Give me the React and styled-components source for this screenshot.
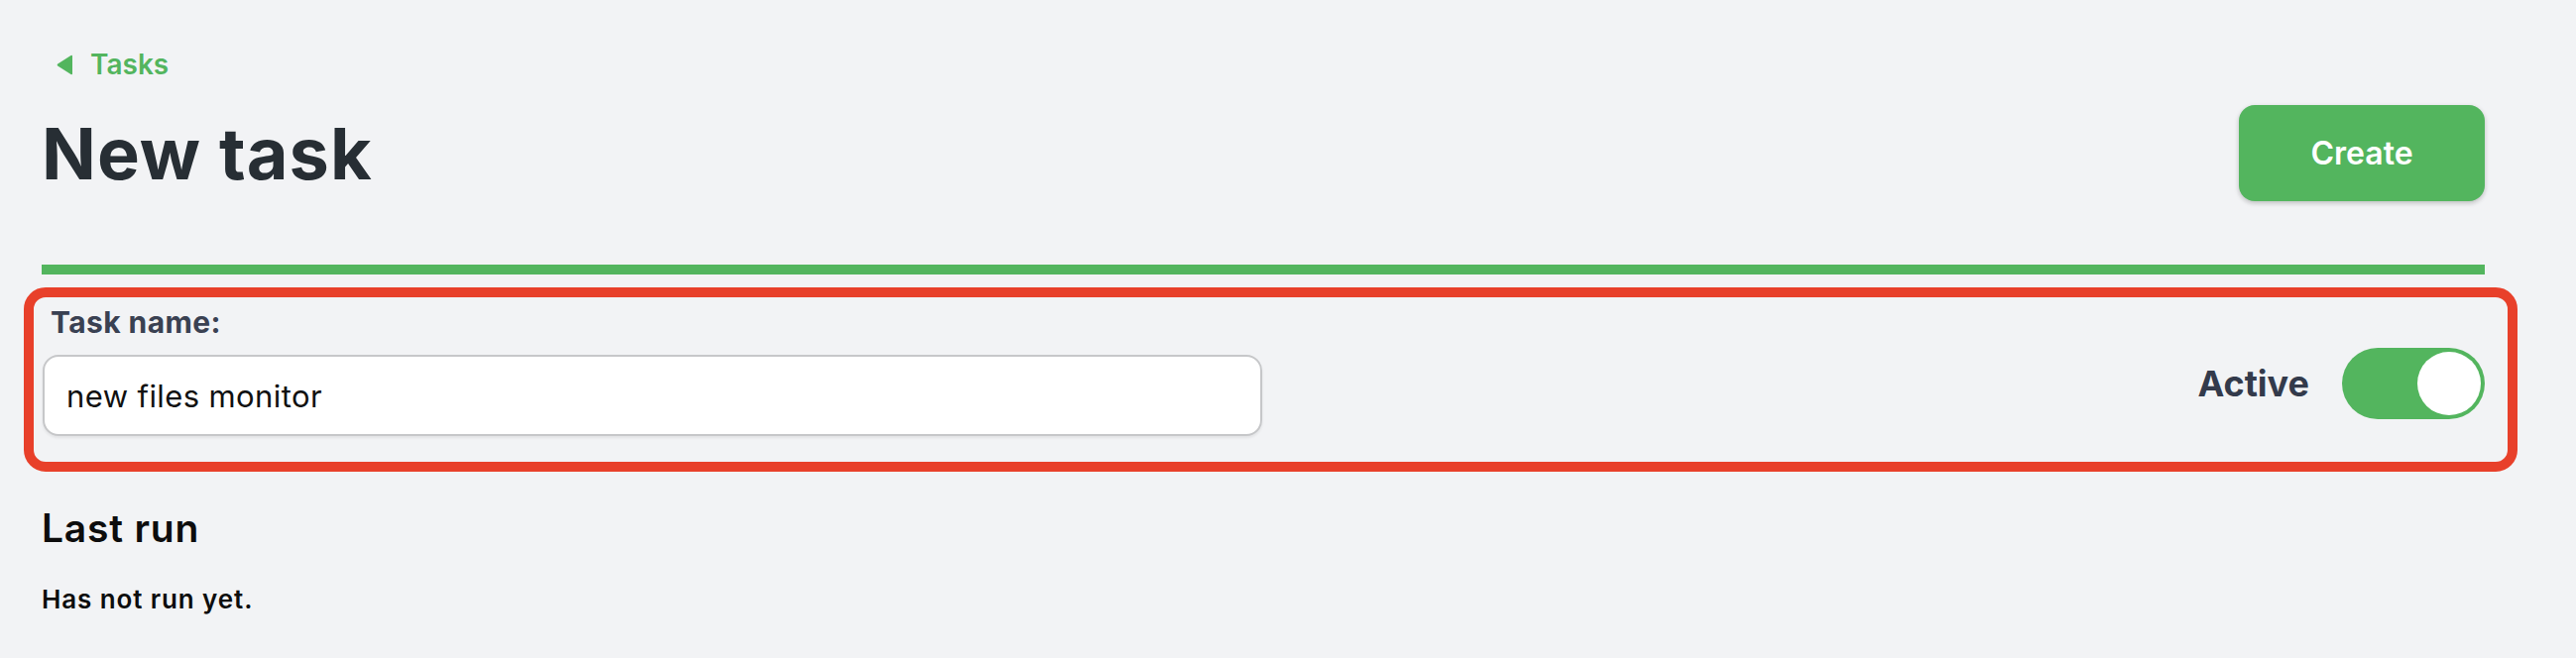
import React, { useState } from 'react'
import styled, { createGlobalStyle } from 'styled-components'

const GlobalStyle = createGlobalStyle`
  * { box-sizing: border-box; }
  body {
    margin: 0;
    background: #f2f3f5;
    font-family: Inter, "Noto Sans", "Liberation Sans", sans-serif;
  }
`

const Page = styled.div`
  padding: 48px 92px 40px 42px;
`

const Breadcrumb = styled.a`
  display: flex;
  align-items: center;
  gap: 17px;
  padding-left: 15px;
  height: 34px;
  font-size: 28px;
  font-weight: 600;
  color: #53b55e;
  text-decoration: none;
`

const Header = styled.div`
  display: flex;
  align-items: center;
  justify-content: space-between;
  margin-top: 24px;
  padding-bottom: 64px;
  border-bottom: 10px solid #53b55e;
`

const Title = styled.h1`
  margin: 0;
  font-size: 72px;
  font-weight: 700;
  letter-spacing: 1px;
  color: #272e34;
  line-height: 87px;
`

const CreateButton = styled.button`
  width: 248px;
  height: 97px;
  border: none;
  border-radius: 16px;
  background: #53b55e;
  color: #fff;
  font-family: inherit;
  font-size: 32px;
  font-weight: 600;
  box-shadow: 0 2px 5px rgba(0, 0, 0, 0.22);
  cursor: pointer;
`

const Highlight = styled.div`
  margin: 13px -33px 0 -18px;
  padding: 7px 23px 26px 9px;
  border: 10px solid #e8402a;
  border-radius: 22px;
`

const FormRow = styled.div`
  display: flex;
  align-items: center;
  justify-content: space-between;
`

const Field = styled.div`
  display: flex;
  flex-direction: column;
  gap: 15px;
`

const Label = styled.label`
  padding-left: 8px;
  font-size: 30px;
  font-weight: 700;
  letter-spacing: 0.4px;
  color: #3a4152;
  line-height: 36px;
`

const TextInput = styled.input`
  width: 1230px;
  height: 82px;
  padding: 0 22px;
  border: 2px solid #c6c7c9;
  border-radius: 16px;
  background: #fff;
  font-family: inherit;
  font-size: 31px;
  letter-spacing: 0.4px;
  color: #111;
  box-shadow: 0 2px 3px rgba(0, 0, 0, 0.07);
  outline: none;
`

const ActiveGroup = styled.div`
  display: flex;
  align-items: center;
  gap: 33px;
  margin-top: 27px;
`

const ActiveLabel = styled.span`
  font-size: 36px;
  font-weight: 700;
  color: #333a4b;
`

const Toggle = styled.button`
  position: relative;
  width: 144px;
  height: 72px;
  padding: 0;
  border: none;
  border-radius: 36px;
  background: ${p => (p.$on ? '#53b55e' : '#c6c7c9')};
  cursor: pointer;
`

const Knob = styled.span`
  position: absolute;
  top: 4px;
  left: ${p => (p.$on ? '76px' : '4px')};
  width: 64px;
  height: 64px;
  border-radius: 50%;
  background: #fff;
`

const SectionTitle = styled.h2`
  margin: 33px 0 0;
  font-size: 39px;
  font-weight: 600;
  letter-spacing: 0.8px;
  line-height: 47px;
  color: #0d0d0d;
`

const Note = styled.p`
  margin: 33px 0 0;
  font-size: 26px;
  font-weight: 600;
  letter-spacing: 0.9px;
  line-height: 32px;
  color: #0d0d0d;
`

export default function App() {
  const [name, setName] = useState('new files monitor')
  const [active, setActive] = useState(true)

  return (
    <>
      <GlobalStyle />
      <Page>
        <Breadcrumb href="#">
          <svg width="17" height="21" viewBox="0 0 17 21">
            <path d="M16 1.8 L16 19.2 Q16 21 14.5 20 L1.2 11.4 Q0 10.5 1.2 9.6 L14.5 1 Q16 0 16 1.8 Z" fill="#53b55e" />
          </svg>
          Tasks
        </Breadcrumb>
        <Header>
          <Title>New task</Title>
          <CreateButton>Create</CreateButton>
        </Header>
        <Highlight>
          <FormRow>
            <Field>
              <Label htmlFor="task-name">Task name:</Label>
              <TextInput id="task-name" value={name} onChange={e => setName(e.target.value)} />
            </Field>
            <ActiveGroup>
              <ActiveLabel>Active</ActiveLabel>
              <Toggle $on={active} onClick={() => setActive(!active)}>
                <Knob $on={active} />
              </Toggle>
            </ActiveGroup>
          </FormRow>
        </Highlight>
        <SectionTitle>Last run</SectionTitle>
        <Note>Has not run yet.</Note>
      </Page>
    </>
  )
}
